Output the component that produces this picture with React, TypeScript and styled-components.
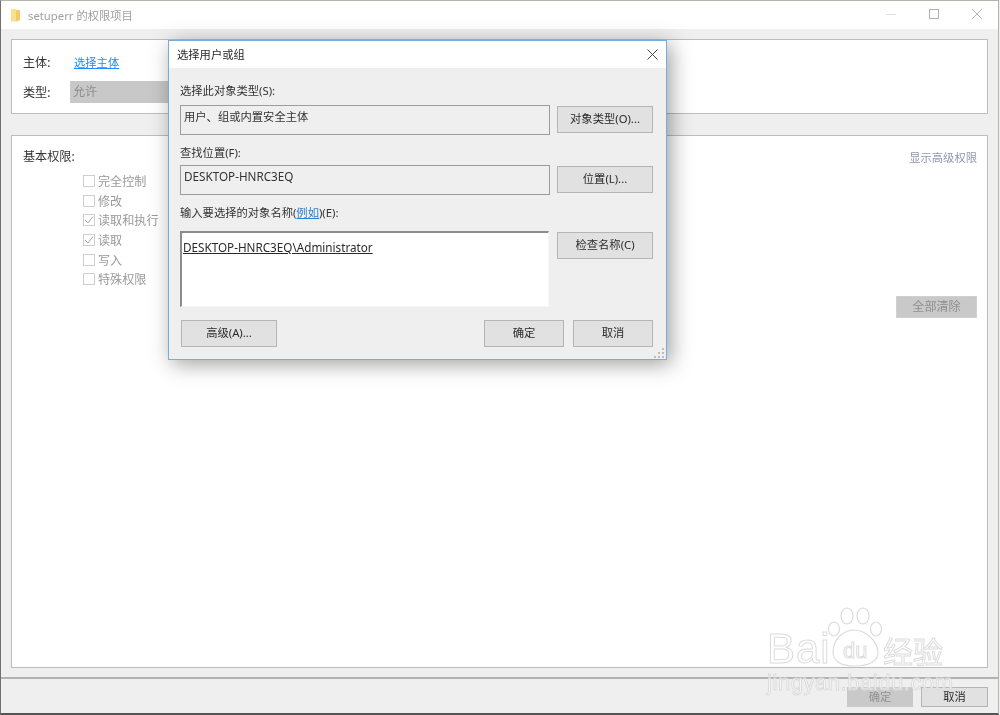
import React from 'react'
import styled, { createGlobalStyle } from 'styled-components'

const GlobalStyle = createGlobalStyle`
  html, body {
    margin: 0;
    padding: 0;
    background: #efefef;
  }
  * { box-sizing: border-box; }
`

const UI_FONT = `"Noto Sans", "Noto Sans CJK SC", sans-serif`
const TEXT_SIZE = '11.3px'
const LATIN_SIZE = '11.7px'
const PANEL_SIZE = '12.1px'

const Desktop = styled.div`
  position: relative;
  width: 1000px;
  height: 715px;
  overflow: hidden;
  font-family: ${UI_FONT};
  font-size: ${TEXT_SIZE};
  background: #efefef;
  filter: blur(0.3px);
`

const MainWindow = styled.div`
  display: flex;
  flex-direction: column;
  width: 999px;
  height: 715px;
  border: 1px solid #b4b4ac;
  border-left-color: #707070;
  border-bottom: 2px solid #555;
`

const TitleBar = styled.div`
  display: flex;
  flex: none;
  align-items: center;
  height: 28px;
  padding: 0 0 1px 9px;
  background: #fff;
`

const TitleText = styled.span`
  flex: 1;
  margin-left: 7px;
  color: #a0a0a0;
`

const WindowButtons = styled.div`
  display: flex;
  align-items: center;
  gap: 33px;
  margin: 0 16px 1px 0;
`

const Body = styled.div`
  display: flex;
  flex: none;
  flex-direction: column;
  height: 648px;
  padding: 10px 10px 9px;
  gap: 21px;
`

const Panel = styled.div<{ $height: number }>`
  flex: none;
  height: ${(p) => p.$height}px;
  font-size: ${PANEL_SIZE};
  background: #fff;
  border: 1px solid #bdbdbd;
`

const PrincipalPanel = styled(Panel)`
  display: grid;
  grid-template-columns: 47px auto;
  grid-template-rows: 22px 22px;
  row-gap: 8px;
  padding: 11px;
  justify-content: start;
  align-items: center;
`

const FieldName = styled.span`
  color: #333;
`

const PrincipalLink = styled.a`
  margin-left: 4px;
  font-size: ${TEXT_SIZE};
  color: #1a8cff;
  text-decoration: underline;
`

const TypeSelect = styled.div`
  width: 120px;
  height: 22px;
  padding-left: 3px;
  line-height: 21px;
  color: #8c8c8c;
  background: #c8c8c8;
`

const PermissionPanel = styled(Panel)`
  display: flex;
  justify-content: space-between;
  padding: 12px 10px 0 11px;
`

const PermissionHeading = styled.div`
  line-height: 18px;
  color: #333;
`

const PermissionList = styled.div`
  display: flex;
  flex-direction: column;
  margin: 5.5px 0 0 60px;
`

const PermissionRow = styled.label`
  display: flex;
  align-items: center;
  gap: 3px;
  height: 19.6px;
  color: #999;
`

const CheckBox = styled.span`
  display: flex;
  align-items: center;
  justify-content: center;
  width: 12px;
  height: 12px;
  border: 1px solid #cfcfcf;
  background: #fff;
`

const SidePart = styled.div`
  display: flex;
  flex-direction: column;
  align-items: flex-end;
`

const AdvancedLink = styled.a`
  line-height: 20px;
  font-size: ${TEXT_SIZE};
  color: #8f97ad;
`

const ClearButton = styled.div`
  width: 81px;
  height: 22px;
  margin-top: 128px;
  text-align: center;
  line-height: 20px;
  color: #8f8f8f;
  background: #c9c9c9;
  border: 1px solid #d0d0d0;
`

const Footer = styled.div`
  display: flex;
  flex: none;
  justify-content: flex-end;
  gap: 8px;
  height: 36px;
  padding: 8px 10px 0 0;
  border-top: 2px solid #b2b2b2;
`

const WinButton = styled.div<{ $width: number; $height?: number; $disabled?: boolean }>`
  width: ${(p) => p.$width}px;
  height: ${(p) => p.$height ?? 27}px;
  text-align: center;
  line-height: ${(p) => (p.$height ?? 27) - 3}px;
  color: ${(p) => (p.$disabled ? '#929292' : '#2a2a2a')};
  background: ${(p) => (p.$disabled ? '#c9c9c9' : '#e1e1e1')};
  border: ${(p) => (p.$disabled ? '1px solid #c9c9c9' : '1.5px solid #b5b5b5')};
`

const Dialog = styled.div`
  position: absolute;
  left: 168px;
  top: 40px;
  display: flex;
  flex-direction: column;
  width: 499px;
  height: 320px;
  background: #efefef;
  border: 1px solid #74aede;
  box-shadow: 4px 4px 20px rgba(0, 0, 0, 0.38);
`

const DialogTitleBar = styled.div`
  display: flex;
  align-items: center;
  justify-content: space-between;
  height: 27px;
  padding: 0 8px 1px 8px;
  background: #fff;
  color: #2a2a2a;
`

const DialogBody = styled.div`
  position: relative;
  display: flex;
  flex-direction: column;
  flex: 1;
  padding: 14px 13px 12px 11px;
`

const DialogLabel = styled.div<{ $gap: number }>`
  height: 17px;
  line-height: 17px;
  margin-bottom: ${(p) => p.$gap}px;
  color: #333;

  a {
    color: #2d7fd3;
    text-decoration: underline;
  }
`

const FieldRow = styled.div<{ $gap: number }>`
  display: flex;
  align-items: flex-start;
  justify-content: space-between;
  margin-bottom: ${(p) => p.$gap}px;
`

const ReadonlyField = styled.div<{ $latin?: boolean }>`
  width: 370px;
  height: 30px;
  padding: 2px 3px;
  line-height: 17px;
  font-size: ${(p) => (p.$latin ? LATIN_SIZE : TEXT_SIZE)};
  color: #333;
  background: #efefef;
  border: 1.5px solid #9c9c9c;
`

const NameInput = styled.div`
  width: 369px;
  height: 76px;
  padding: 6px 1px;
  background: #fff;
  border-top: 2px solid #8c8c8c;
  border-left: 2px solid #8c8c8c;
  border-right: 1px solid #f6f6f6;
  border-bottom: 1px solid #f6f6f6;
  font-size: ${LATIN_SIZE};
  line-height: 17px;
  color: #2a2a2a;
  text-decoration: underline;
`

const FieldButton = styled(WinButton)`
  margin-top: 1px;
`

const DialogActions = styled.div`
  display: flex;
  justify-content: flex-end;
  gap: 9px;
  margin-top: 13px;
  padding-left: 1px;
`

const AdvancedButton = styled(WinButton)`
  margin-right: auto;
`

const GripMark = styled.svg`
  position: absolute;
  right: 1px;
  bottom: 1px;
`

const Watermark = styled.div`
  position: absolute;
  left: 767px;
  top: 605px;
  width: 180px;
  pointer-events: none;
  color: rgba(255, 255, 255, 0.55);
  -webkit-text-stroke: 1px #dcdcdc;
  font-family: "Liberation Sans", sans-serif;
`

const WatermarkTop = styled.div`
  position: relative;
  height: 65px;
`

const PawMark = styled.svg`
  position: absolute;
  left: 60px;
  top: 2px;
`

const WatermarkBai = styled.span`
  position: absolute;
  left: 0;
  top: 21px;
  font-size: 42px;
  line-height: 46px;
  letter-spacing: 1px;
`

const WatermarkDu = styled.span`
  position: absolute;
  left: 76px;
  top: 34px;
  font-size: 22px;
  line-height: 24px;
`

const WatermarkCn = styled.span`
  position: absolute;
  left: 116px;
  top: 27px;
  font-family: "Noto Sans CJK SC", sans-serif;
  font-size: 30px;
  line-height: 36px;
`

const WatermarkUrl = styled.div`
  font-size: 22px;
  line-height: 26px;
  letter-spacing: 0.55px;
  white-space: nowrap;
`

const FolderIcon = () => (
  <svg width="11" height="14" viewBox="0 0 11 14">
    <path d="M1 1h5l1 1h3v10l-4 1.5H1z" fill="#f8e08e" />
    <path d="M6 2.5l4-.5v10l-4 1.5z" fill="#f1cb68" />
  </svg>
)

const WindowIcons = () => (
  <WindowButtons>
    <svg width="10" height="10" viewBox="0 0 10 10">
      <path d="M0 5.5h10" stroke="#e2e2e2" />
    </svg>
    <svg width="10" height="10" viewBox="0 0 10 10">
      <rect x="0.5" y="0.5" width="9" height="9" fill="none" stroke="#b0b0b0" />
    </svg>
    <svg width="10" height="10" viewBox="0 0 10 10">
      <path d="M0 0l10 10M10 0L0 10" stroke="#b8b8b8" />
    </svg>
  </WindowButtons>
)

const permissions = [
  { label: '完全控制', checked: false },
  { label: '修改', checked: false },
  { label: '读取和执行', checked: true },
  { label: '读取', checked: true },
  { label: '写入', checked: false },
  { label: '特殊权限', checked: false },
]

const App: React.FC = () => {
  return (
    <Desktop>
      <GlobalStyle />
      <MainWindow>
        <TitleBar>
          <FolderIcon />
          <TitleText>setuperr 的权限项目</TitleText>
          <WindowIcons />
        </TitleBar>
        <Body>
          <PrincipalPanel $height={75}>
            <FieldName>主体:</FieldName>
            <PrincipalLink>选择主体</PrincipalLink>
            <FieldName>类型:</FieldName>
            <TypeSelect>允许</TypeSelect>
          </PrincipalPanel>
          <PermissionPanel $height={533}>
            <div>
              <PermissionHeading>基本权限:</PermissionHeading>
              <PermissionList>
                {permissions.map((item) => (
                  <PermissionRow key={item.label}>
                    <CheckBox>
                      {item.checked && (
                        <svg width="10" height="10" viewBox="0 0 10 10">
                          <path d="M1 5l3 3 5-6.5" fill="none" stroke="#a8a8a8" />
                        </svg>
                      )}
                    </CheckBox>
                    {item.label}
                  </PermissionRow>
                ))}
              </PermissionList>
            </div>
            <SidePart>
              <AdvancedLink>显示高级权限</AdvancedLink>
              <ClearButton>全部清除</ClearButton>
            </SidePart>
          </PermissionPanel>
        </Body>
        <Footer>
          <WinButton $width={66} $height={20} $disabled>
            确定
          </WinButton>
          <WinButton $width={67} $height={20}>
            取消
          </WinButton>
        </Footer>
      </MainWindow>

      <Dialog>
        <DialogTitleBar>
          <span>选择用户或组</span>
          <svg width="11" height="11" viewBox="0 0 11 11">
            <path d="M0.5 0.5l10 10M10.5 0.5l-10 10" stroke="#444" />
          </svg>
        </DialogTitleBar>
        <DialogBody>
          <DialogLabel $gap={6}>选择此对象类型(S):</DialogLabel>
          <FieldRow $gap={9}>
            <ReadonlyField>用户、组或内置安全主体</ReadonlyField>
            <FieldButton $width={96}>对象类型(O)...</FieldButton>
          </FieldRow>
          <DialogLabel $gap={4}>查找位置(F):</DialogLabel>
          <FieldRow $gap={9}>
            <ReadonlyField $latin>DESKTOP-HNRC3EQ</ReadonlyField>
            <FieldButton $width={96}>位置(L)...</FieldButton>
          </FieldRow>
          <DialogLabel $gap={10}>
            输入要选择的对象名称(<a>例如</a>)(E):
          </DialogLabel>
          <FieldRow $gap={0}>
            <NameInput>DESKTOP-HNRC3EQ\Administrator</NameInput>
            <FieldButton $width={96}>检查名称(C)</FieldButton>
          </FieldRow>
          <DialogActions>
            <AdvancedButton $width={96}>高级(A)...</AdvancedButton>
            <WinButton $width={80}>确定</WinButton>
            <WinButton $width={80}>取消</WinButton>
          </DialogActions>
          <GripMark width="11" height="11" viewBox="0 0 11 11">
            <path d="M8 1h2v2H8zM4 5h2v2H4zM8 5h2v2H8zM0 9h2v2H0zM4 9h2v2H4zM8 9h2v2H8z" fill="#bdbdbd" />
          </GripMark>
        </DialogBody>
      </Dialog>

      <Watermark>
        <WatermarkTop>
          <PawMark width="58" height="62" viewBox="0 0 58 62">
            <g fill="none" stroke="#dcdcdc" strokeWidth="1.2">
              <ellipse cx="7" cy="22" rx="5.5" ry="7" />
              <ellipse cx="20" cy="9" rx="6" ry="8" />
              <ellipse cx="36" cy="9" rx="6" ry="8" />
              <ellipse cx="49" cy="22" rx="5.5" ry="7" />
              <path d="M6 45c0-14 12-22 21-22s24 9 24 23c0 8-9 13-23 13S6 54 6 45z" />
            </g>
          </PawMark>
          <WatermarkBai>Bai</WatermarkBai>
          <WatermarkDu>du</WatermarkDu>
          <WatermarkCn>经验</WatermarkCn>
        </WatermarkTop>
        <WatermarkUrl>jingyan.baidu.com</WatermarkUrl>
      </Watermark>
    </Desktop>
  )
}

export default App
